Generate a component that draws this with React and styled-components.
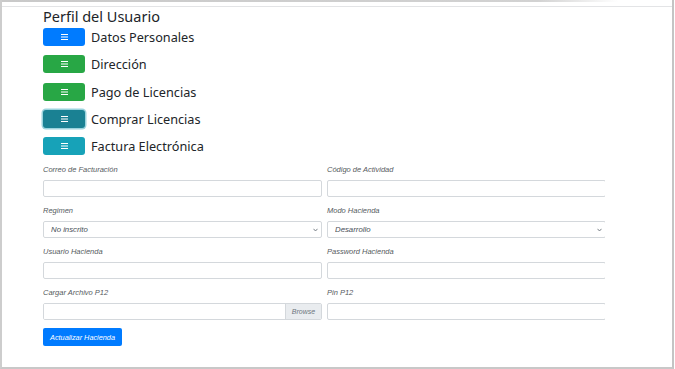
import React from 'react'
import styled, { createGlobalStyle } from 'styled-components'

const GlobalStyle = createGlobalStyle`
  html, body {
    margin: 0;
    padding: 0;
    background: #ffffff;
  }
  * { box-sizing: border-box; }
`

const Frame = styled.div`
  width: 674px;
  height: 369px;
  border-left: 2px solid #cdcdcd;
  border-right: 2px solid #c4c4c4;
  border-bottom: 2px solid #c8c8c8;
  background: #fff;
  overflow: hidden;
`

const TopShade = styled.div`
  height: 2px;
  background: linear-gradient(to right, #c9c9c9 0%, #d2d2d2 80%, rgba(255,255,255,0) 92%);
`

const TopLine = styled.div`
  height: 1px;
  margin-top: 4px;
  background: #e3e4e6;
`

const Content = styled.div`
  padding-left: 41px;
`

const Title = styled.h4`
  margin: 0;
  font-family: "Noto Sans", "Open Sans", sans-serif;
  font-weight: 400;
  font-size: 14.5px;
  line-height: 18px;
  color: #212529;
`

const Menu = styled.div`
  display: flex;
  flex-direction: column;
  gap: 9.25px;
  margin-top: 3px;
`

const MenuRow = styled.div`
  display: flex;
  align-items: center;
  height: 18px;
  gap: 6px;
`

const IconButton = styled.button`
  width: 42px;
  height: 18px;
  border: none;
  border-radius: 3px;
  padding: 0;
  display: flex;
  align-items: center;
  justify-content: center;
  background: ${({ color }) => color};
  box-shadow: ${({ $focused }) => ($focused ? '0 0 0 1.5px rgba(120, 196, 210, 0.75)' : 'none')};
`

const MenuLabel = styled.span`
  font-family: "Noto Sans", "Open Sans", sans-serif;
  font-size: 12.7px;
  color: #212529;
  white-space: nowrap;
`

const Form = styled.div`
  width: 562px;
  overflow: hidden;
  margin-top: 10px;
`

const Grid = styled.div`
  display: grid;
  grid-template-columns: 279px 279px;
  column-gap: 5px;
  row-gap: 9px;
`

const Group = styled.div`
  display: flex;
  flex-direction: column;
`

const Label = styled.label`
  font-family: "Liberation Sans", Arial, sans-serif;
  font-style: italic;
  font-size: 7.5px;
  line-height: 10px;
  height: 10px;
  margin-bottom: 5px;
  color: #555a60;
  white-space: nowrap;
`

const Input = styled.input`
  display: block;
  width: 100%;
  height: 17px;
  border: 1px solid #d4d8dc;
  border-radius: 2px;
  background: #fff;
  padding: 0 7px;
  font-family: "Liberation Sans", Arial, sans-serif;
  font-style: italic;
  font-size: 7.5px;
  outline: none;
`

const SelectWrap = styled.div`
  position: relative;
  height: 17px;
`

const Select = styled.select`
  display: block;
  appearance: none;
  width: 100%;
  height: 17px;
  border: 1px solid #d4d8dc;
  border-radius: 2px;
  background: #fff;
  padding: 0 7px;
  font-family: "Liberation Sans", Arial, sans-serif;
  font-style: italic;
  font-size: 7.8px;
  color: #495057;
  outline: none;
`

const Chevron = styled.svg`
  position: absolute;
  right: 4px;
  top: 7px;
  width: 5px;
  height: 4px;
  pointer-events: none;
`

const FileBox = styled.div`
  display: flex;
  height: 17px;
  border: 1px solid #d4d8dc;
  border-radius: 2px;
  overflow: hidden;
`

const FileField = styled.div`
  flex: 1;
  background: #fff;
`

const Browse = styled.span`
  width: 36px;
  display: flex;
  align-items: center;
  justify-content: center;
  background: #e9ecef;
  border-left: 1px solid #d4d8dc;
  font-family: "Liberation Sans", Arial, sans-serif;
  font-style: italic;
  font-size: 7px;
  color: #6c757d;
`

const Submit = styled.button`
  display: block;
  margin-top: 8px;
  width: 79px;
  height: 18px;
  border: none;
  border-radius: 2px;
  background: #007bff;
  color: #fff;
  padding: 0;
  font-family: "Liberation Sans", Arial, sans-serif;
  font-style: italic;
  font-size: 7.3px;
`

function Bars() {
  return (
    <svg width="7" height="6" viewBox="0 0 7 6">
      <rect x="0" y="0" width="7" height="1" fill="#fff" />
      <rect x="0" y="2.5" width="7" height="1" fill="#fff" />
      <rect x="0" y="5" width="7" height="1" fill="#fff" />
    </svg>
  )
}

const menu = [
  { label: 'Datos Personales', color: '#007bff' },
  { label: 'Dirección', color: '#28a745' },
  { label: 'Pago de Licencias', color: '#28a745' },
  { label: 'Comprar Licencias', color: '#1a8193', focused: true },
  { label: 'Factura Electrónica', color: '#17a2b8' },
]

function SelectField({ label, value }) {
  return (
    <Group>
      <Label>{label}</Label>
      <SelectWrap>
        <Select defaultValue={value}>
          <option>{value}</option>
        </Select>
        <Chevron viewBox="0 0 5 4">
          <path d="M0.5 0.8 L2.5 3 L4.5 0.8" stroke="#6c757d" strokeWidth="0.9" fill="none" />
        </Chevron>
      </SelectWrap>
    </Group>
  )
}

function TextField({ label, type = 'text' }) {
  return (
    <Group>
      <Label>{label}</Label>
      <Input type={type} />
    </Group>
  )
}

export default function App() {
  return (
    <>
      <GlobalStyle />
      <Frame>
        <TopShade />
        <TopLine />
        <Content>
          <Title>Perfil del Usuario</Title>
          <Menu>
            {menu.map((item) => (
              <MenuRow key={item.label}>
                <IconButton color={item.color} $focused={item.focused}>
                  <Bars />
                </IconButton>
                <MenuLabel>{item.label}</MenuLabel>
              </MenuRow>
            ))}
          </Menu>
          <Form>
            <Grid>
              <TextField label="Correo de Facturación" />
              <TextField label="Código de Actividad" />
              <SelectField label="Regimen" value="No inscrito" />
              <SelectField label="Modo Hacienda" value="Desarrollo" />
              <TextField label="Usuario Hacienda" />
              <TextField label="Password Hacienda" type="password" />
              <Group>
                <Label>Cargar Archivo P12</Label>
                <FileBox>
                  <FileField />
                  <Browse>Browse</Browse>
                </FileBox>
              </Group>
              <TextField label="Pin P12" />
            </Grid>
            <Submit>Actualizar Hacienda</Submit>
          </Form>
        </Content>
      </Frame>
    </>
  )
}
